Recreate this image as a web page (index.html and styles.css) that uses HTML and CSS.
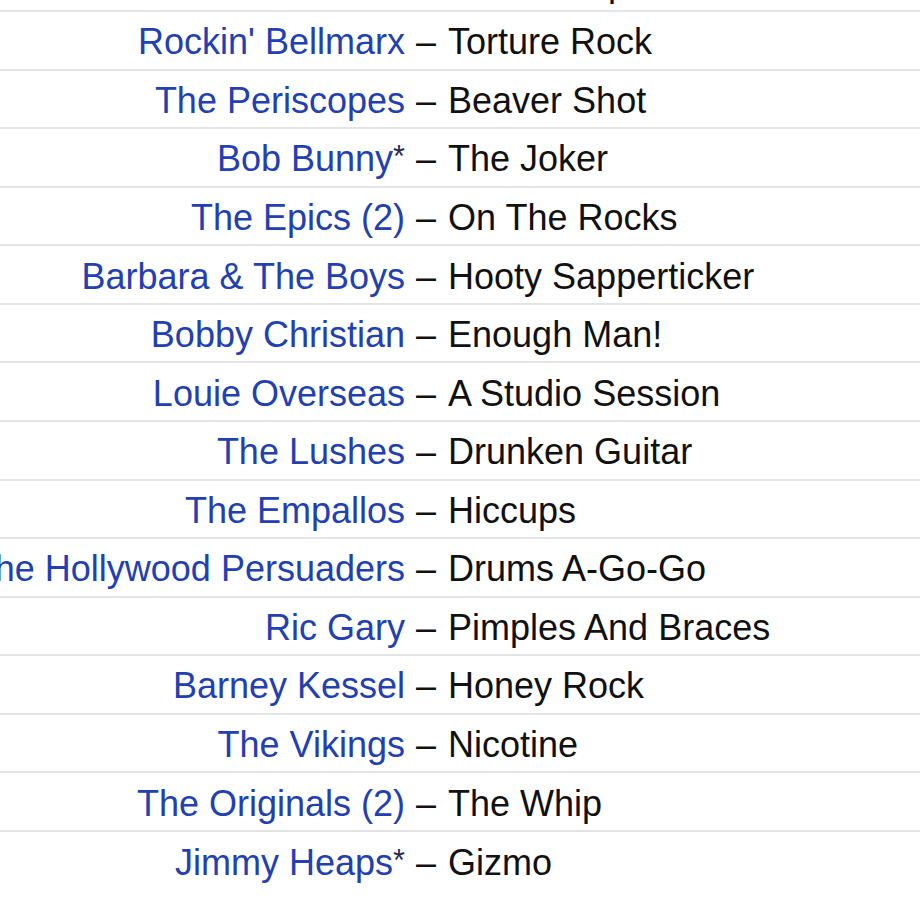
FILE: index.html
```html
<!DOCTYPE html>
<html lang="en">
<head>
<meta charset="utf-8">
<title>Tracklist</title>
<link rel="stylesheet" href="styles.css">
</head>
<body>
<div class="tracklist">
  <div class="row"><div class="artist"><a href="#">The Tornados</a></div><div class="track"><span class="sep">–</span>Surf Stomp</div></div>
  <div class="row"><div class="artist"><a href="#">Rockin' Bellmarx</a></div><div class="track"><span class="sep">–</span>Torture Rock</div></div>
  <div class="row"><div class="artist"><a href="#">The Periscopes</a></div><div class="track"><span class="sep">–</span>Beaver Shot</div></div>
  <div class="row"><div class="artist"><a href="#">Bob Bunny<span class="anv">*</span></a></div><div class="track"><span class="sep">–</span>The Joker</div></div>
  <div class="row"><div class="artist"><a href="#">The Epics (2)</a></div><div class="track"><span class="sep">–</span>On The Rocks</div></div>
  <div class="row"><div class="artist"><a href="#">Barbara &amp; The Boys</a></div><div class="track"><span class="sep">–</span>Hooty Sapperticker</div></div>
  <div class="row"><div class="artist"><a href="#">Bobby Christian</a></div><div class="track"><span class="sep">–</span>Enough Man!</div></div>
  <div class="row"><div class="artist"><a href="#">Louie Overseas</a></div><div class="track"><span class="sep">–</span>A Studio Session</div></div>
  <div class="row"><div class="artist"><a href="#">The Lushes</a></div><div class="track"><span class="sep">–</span>Drunken Guitar</div></div>
  <div class="row"><div class="artist"><a href="#">The Empallos</a></div><div class="track"><span class="sep">–</span>Hiccups</div></div>
  <div class="row"><div class="artist"><a href="#">The Hollywood Persuaders</a></div><div class="track"><span class="sep">–</span>Drums A-Go-Go</div></div>
  <div class="row"><div class="artist"><a href="#">Ric Gary</a></div><div class="track"><span class="sep">–</span>Pimples And Braces</div></div>
  <div class="row"><div class="artist"><a href="#">Barney Kessel</a></div><div class="track"><span class="sep">–</span>Honey Rock</div></div>
  <div class="row"><div class="artist"><a href="#">The Vikings</a></div><div class="track"><span class="sep">–</span>Nicotine</div></div>
  <div class="row"><div class="artist"><a href="#">The Originals (2)</a></div><div class="track"><span class="sep">–</span>The Whip</div></div>
  <div class="row last"><div class="artist"><a href="#">Jimmy Heaps<span class="anv">*</span></a></div><div class="track"><span class="sep">–</span>Gizmo</div></div>
</div>
</body>
</html>
```
FILE: styles.css
```css
html, body {
  margin: 0;
  padding: 0;
  background: #ffffff;
  overflow: hidden;
}

body {
  font-family: "Liberation Sans", Arial, Helvetica, sans-serif;
  font-size: 36px;
  color: #111111;
}

.tracklist {
  margin-top: -46.57px;
}

.row {
  display: grid;
  grid-template-columns: 405px 1fr;
  align-items: center;
  height: 58.57px;
  box-sizing: border-box;
  padding-top: 4px;
  border-bottom: 2px solid #e4e4e4;
}

.row.last {
  border-bottom: none;
}

.artist {
  display: flex;
  justify-content: flex-end;
  white-space: nowrap;
  min-width: 0;
}

.artist a {
  color: #2340b2;
  text-decoration: none;
}

.anv {
  color: #2a2a55;
  font-size: 0.85em;
  vertical-align: 0.14em;
}

.track {
  white-space: nowrap;
}

.sep {
  margin: 0 12px 0 11px;
}
```
